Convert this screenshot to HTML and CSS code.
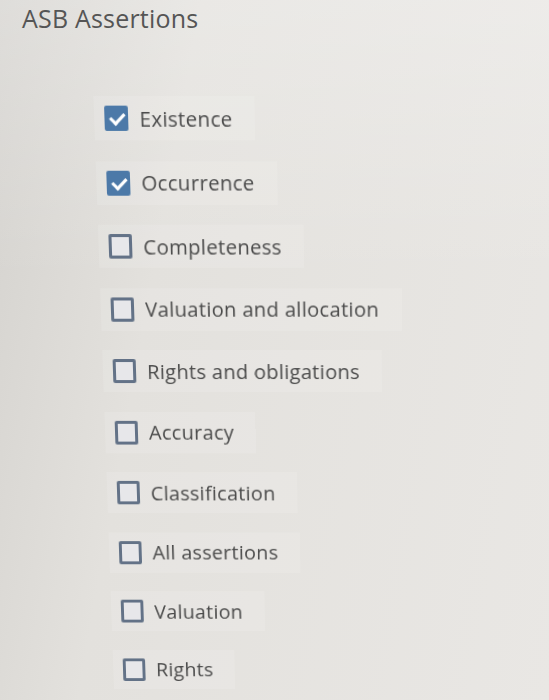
FILE: index.html
```html
<!DOCTYPE html>
<html lang="en">
  <head>
    <meta charset="UTF-8" />
    <meta name="viewport" content="width=device-width, initial-scale=1.0" />
    <title>ASB Assertions</title>
    <link rel="stylesheet" href="styles.css">
  </head>
  <body>
    <h2 class="title">ASB Assertions</h2>

    <div class="options">
      <label class="option">
        <input type="checkbox" checked />
        <span class="box"></span>
        <span class="text">Existence</span>
      </label>
      <label class="option">
        <input type="checkbox" checked />
        <span class="box"></span>
        <span class="text">Occurrence</span>
      </label>
      <label class="option">
        <input type="checkbox" />
        <span class="box"></span>
        <span class="text">Completeness</span>
      </label>
      <label class="option">
        <input type="checkbox" />
        <span class="box"></span>
        <span class="text">Valuation and allocation</span>
      </label>
      <label class="option">
        <input type="checkbox" />
        <span class="box"></span>
        <span class="text">Rights and obligations</span>
      </label>
      <label class="option">
        <input type="checkbox" />
        <span class="box"></span>
        <span class="text">Accuracy</span>
      </label>
      <label class="option">
        <input type="checkbox" />
        <span class="box"></span>
        <span class="text">Classification</span>
      </label>
      <label class="option">
        <input type="checkbox" />
        <span class="box"></span>
        <span class="text">All assertions</span>
      </label>
      <label class="option">
        <input type="checkbox" />
        <span class="box"></span>
        <span class="text">Valuation</span>
      </label>
      <label class="option">
        <input type="checkbox" />
        <span class="box"></span>
        <span class="text">Rights</span>
      </label>
    </div>
  </body>
</html>
```

FILE: styles.css
```css
body {
  font-family: "Open Sans", "Lato", sans-serif;
  background:
    linear-gradient(180deg, rgba(255, 255, 255, 0.25) 0%, rgba(255, 255, 255, 0) 40%),
    linear-gradient(100deg, #d4d2ce 0%, #e3e1dd 30%, #e9e7e4 100%);
  color: #4a4a4a;
  margin: 0;
  padding: 0;
  height: 700px;
  overflow: hidden;
}

.title {
  margin: 0;
  padding: 1px 0 0 22px;
  font-size: 25px;
  font-weight: normal;
  letter-spacing: 0.2px;
  color: #555;
}

/* the list is tilted a little, like the screen it was read from */
.options {
  display: flex;
  flex-direction: column;
  align-items: flex-start;
  gap: 19.5px;
  margin-top: 69px;
  padding-left: 104px;
  transform: perspective(1000px) rotateX(-6deg) skewX(2deg);
  transform-origin: 100px 50%;
}

.option {
  display: flex;
  align-items: center;
  gap: 11px;
  height: 42px;
  padding: 0 22px 0 10px;
  background-color: rgba(255, 255, 255, 0.12);
  cursor: pointer;
}

.option input {
  display: none;
}

.box {
  width: 17px;
  height: 18px;
  border: 3px solid #637287;
  border-radius: 2px;
  background-color: #e7e7ea;
  position: relative;
}

.option input:checked + .box {
  background-color: #4c79a8;
  border-color: #4c79a8;
}

/* check mark */
.option input:checked + .box::after {
  content: "";
  position: absolute;
  left: 5px;
  top: 1px;
  width: 6px;
  height: 11px;
  border: solid #fff;
  border-width: 0 3px 3px 0;
  transform: rotate(45deg);
}

.text {
  font-size: 20px;
  letter-spacing: 0.3px;
}
```
